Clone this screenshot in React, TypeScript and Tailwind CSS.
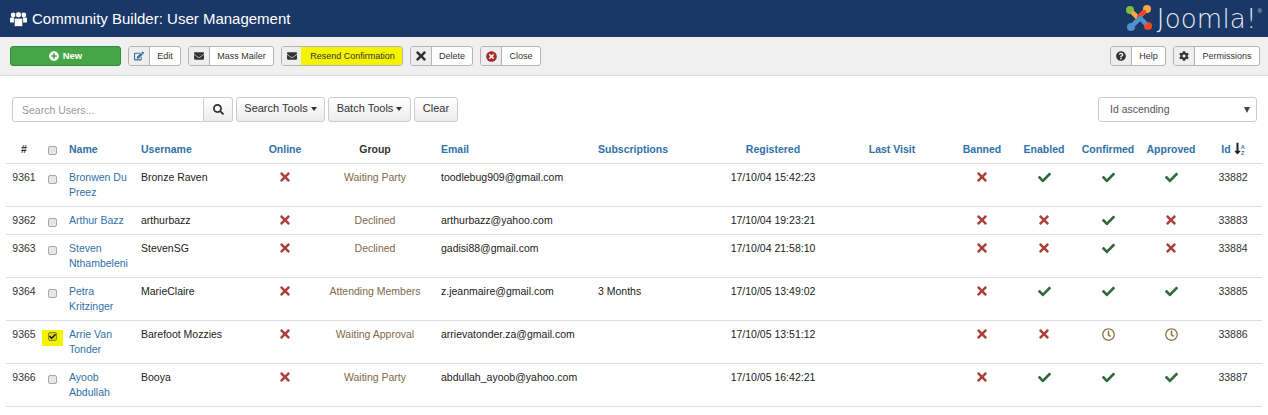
import {
  FaTimes,
  FaCheck,
  FaRegClock,
  FaSearch,
  FaCog,
  FaQuestionCircle,
  FaEnvelope,
  FaEdit,
  FaTimesCircle,
  FaPlusCircle,
  FaLongArrowAltDown,
} from "react-icons/fa";
import type { ReactNode } from "react";

type Status = "yes" | "no" | "wait";

interface Row {
  num: number;
  name: string[];
  username: string;
  group: string;
  email: string;
  subs: string;
  registered: string;
  banned: Status;
  enabled: Status;
  confirmed: Status;
  approved: Status;
  id: number;
  checked?: boolean;
}

const rows: Row[] = [
  { num: 9361, name: ["Bronwen Du", "Preez"], username: "Bronze Raven", group: "Waiting Party", email: "toodlebug909@gmail.com", subs: "", registered: "17/10/04 15:42:23", banned: "no", enabled: "yes", confirmed: "yes", approved: "yes", id: 33882 },
  { num: 9362, name: ["Arthur Bazz"], username: "arthurbazz", group: "Declined", email: "arthurbazz@yahoo.com", subs: "", registered: "17/10/04 19:23:21", banned: "no", enabled: "no", confirmed: "yes", approved: "no", id: 33883 },
  { num: 9363, name: ["Steven", "Nthambeleni"], username: "StevenSG", group: "Declined", email: "gadisi88@gmail.com", subs: "", registered: "17/10/04 21:58:10", banned: "no", enabled: "no", confirmed: "yes", approved: "no", id: 33884 },
  { num: 9364, name: ["Petra", "Kritzinger"], username: "MarieClaire", group: "Attending Members", email: "z.jeanmaire@gmail.com", subs: "3 Months", registered: "17/10/05 13:49:02", banned: "no", enabled: "yes", confirmed: "yes", approved: "yes", id: 33885 },
  { num: 9365, name: ["Arrie Van", "Tonder"], username: "Barefoot Mozzies", group: "Waiting Approval", email: "arrievatonder.za@gmail.com", subs: "", registered: "17/10/05 13:51:12", banned: "no", enabled: "no", confirmed: "wait", approved: "wait", id: 33886, checked: true },
  { num: 9366, name: ["Ayoob", "Abdullah"], username: "Booya", group: "Waiting Party", email: "abdullah_ayoob@yahoo.com", subs: "", registered: "17/10/05 16:42:21", banned: "no", enabled: "yes", confirmed: "yes", approved: "yes", id: 33887 },
];

function StatusIcon({ status }: { status: Status }) {
  if (status === "yes") return <FaCheck className="mx-auto text-[13px] text-[#2f6b3c]" />;
  if (status === "no") return <FaTimes className="mx-auto text-[14px] text-[#a9413c]" />;
  return <FaRegClock className="mx-auto text-[13px] text-[#8a6d3b]" />;
}

function ToolButton({ icon, label, width, highlight }: { icon: ReactNode; label: string; width: string; highlight?: boolean }) {
  return (
    <button className={`flex h-[20px] items-stretch overflow-hidden rounded-[3px] border border-[#b3b3b3] bg-white text-[9px] text-[#333] ${width}`}>
      <span className="flex w-[21px] shrink-0 items-center justify-center border-r border-[#b3b3b3] bg-[#eeeeee] text-[10px] text-[#333]">
        {icon}
      </span>
      {highlight ? (
        <span className="-ml-[2px] flex flex-1 items-center justify-center bg-[#f4f400] pl-[2px] pt-[1px]">{label}</span>
      ) : (
        <span className="flex flex-1 items-center justify-center pt-[1px]">{label}</span>
      )}
    </button>
  );
}

function Caret() {
  return <span className="ml-[3px] inline-block border-x-[3px] border-t-[4px] border-x-transparent border-t-[#333] align-middle" />;
}

function UsersIcon() {
  return (
    <svg width="17" height="16" viewBox="0 0 17 16" fill="#ffffff">
      <circle cx="3.2" cy="4" r="2.4" />
      <circle cx="13.8" cy="4" r="2.4" />
      <path d="M0 7.5 Q0 6.6 1 6.6 H4 V11.5 H0 Z" />
      <path d="M13 6.6 H16 Q17 6.6 17 7.5 V11.5 H13 Z" />
      <circle cx="8.5" cy="3.8" r="3" stroke="#1a3867" strokeWidth="0.7" />
      <path d="M4.3 8.2 Q4.3 7.3 5.3 7.3 H11.7 Q12.7 7.3 12.7 8.2 V14.5 Q12.7 15.5 11.7 15.5 H5.3 Q4.3 15.5 4.3 14.5 Z" stroke="#1a3867" strokeWidth="0.7" />
    </svg>
  );
}

function JoomlaLogo() {
  return (
    <div className="flex items-start gap-[4px]">
      <svg width="28" height="28" viewBox="0 0 28 28" fill="none" strokeWidth="4.4" strokeLinejoin="round" strokeLinecap="round">
        <path d="M5 6 L14 15 L9 20" stroke="#7ac143" />
        <circle cx="5" cy="6" r="4" fill="#7ac143" />
        <path d="M22 5 L13 14 L8 9" stroke="#f9a541" />
        <circle cx="22" cy="5" r="4" fill="#f9a541" />
        <path d="M23 22 L14 13 L19 8" stroke="#f44321" />
        <circle cx="23" cy="22" r="4" fill="#f44321" />
        <path d="M6 23 L15 14 L20 19" stroke="#5091cd" />
        <circle cx="6" cy="23" r="4" fill="#5091cd" />
      </svg>
      <span className="mt-[1px] whitespace-nowrap font-['DejaVu_Sans',sans-serif] text-[26px] font-extralight leading-[28px] tracking-[0.2px] text-[#e8ecf2]">
        Joomla!
      </span>
      <span className="-ml-[3px] mt-[4px] text-[6px] leading-none text-[#cfd6e0]">®</span>
    </div>
  );
}

const thBlue = "px-0 py-0 font-bold text-[#3071a9]";
const box = "block h-[9px] w-[9px] appearance-none rounded-[2px] border border-[#a8a8a8] bg-[#e6e6e6]";

export default function App() {
  return (
    <div className="h-[415px] w-[1268px] overflow-hidden bg-white font-['Liberation_Sans',Arial,sans-serif] text-[10.5px] text-[#333]">
      <header className="flex h-[37px] items-center justify-between bg-[#1a3867] pl-[10px] pr-[6px]">
        <div className="flex items-center gap-[5px] text-white">
          <UsersIcon />
          <h1 className="text-[15px] leading-none">Community Builder: User Management</h1>
        </div>
        <JoomlaLogo />
      </header>

      <div className="flex h-[39px] items-start justify-between border-b border-[#dcdcdc] bg-[#f0f0f0] px-[8px] pt-[9px]">
        <div className="flex gap-[7px] pl-[2px]">
          <button className="flex h-[20px] w-[111px] items-center justify-center gap-[4px] rounded-[3px] border border-[#2e8b3a] bg-[#46a546] text-[9.5px] font-bold text-white">
            <FaPlusCircle className="text-[10px]" />
            New
          </button>
          <ToolButton width="w-[53px]" icon={<FaEdit className="text-[#3b6f9a]" />} label="Edit" />
          <ToolButton width="w-[86px]" icon={<FaEnvelope />} label="Mass Mailer" />
          <ToolButton width="w-[122px]" icon={<FaEnvelope />} label="Resend Confirmation" highlight />
          <ToolButton width="w-[63px]" icon={<FaTimes className="text-[14px]" />} label="Delete" />
          <ToolButton width="w-[61px]" icon={<FaTimesCircle className="text-[11px] text-[#a82a2a]" />} label="Close" />
        </div>
        <div className="flex gap-[7px]">
          <ToolButton width="w-[56px]" icon={<FaQuestionCircle />} label="Help" />
          <ToolButton width="w-[87px]" icon={<FaCog />} label="Permissions" />
        </div>
      </div>

      <div className="flex items-start justify-between pl-[12px] pr-[11px] pt-[21px]">
        <div className="flex gap-[3px]">
          <div className="flex">
            <input
              className="h-[25px] w-[192px] rounded-l-[3px] border border-[#cccccc] px-[9px] text-[10.5px] outline-none placeholder:text-[#999]"
              placeholder="Search Users..."
            />
            <button className="flex h-[25px] w-[29px] items-center justify-center rounded-r-[3px] border border-l-0 border-[#cccccc] bg-linear-to-b from-white to-[#ececec] text-[11px]">
              <FaSearch />
            </button>
          </div>
          <button className="h-[25px] w-[89px] rounded-[3px] border border-[#cccccc] bg-linear-to-b from-white to-[#ececec] pb-[2px] text-[11px]">
            Search Tools
            <Caret />
          </button>
          <button className="h-[25px] w-[83px] rounded-[3px] border border-[#cccccc] bg-linear-to-b from-white to-[#ececec] pb-[2px] text-[11px]">
            Batch Tools
            <Caret />
          </button>
          <button className="h-[25px] w-[44px] rounded-[3px] border border-[#cccccc] bg-linear-to-b from-white to-[#ececec] pb-[2px] text-[11px]">
            Clear
          </button>
        </div>
        <div className="flex h-[25px] w-[159px] items-center justify-between rounded-[3px] border border-[#cccccc] pl-[11px] pr-[6px] text-[10.5px] text-[#555]">
          Id ascending
          <span className="inline-block border-x-[3px] border-t-[6px] border-x-transparent border-t-[#444]" />
        </div>
      </div>

      <div className="pl-[6px] pt-[15px]">
        <table className="w-[1256px] table-fixed border-collapse">
          <colgroup>
            <col className="w-[36px]" />
            <col className="w-[21px]" />
            <col className="w-[72px]" />
            <col className="w-[120px]" />
            <col className="w-[60px]" />
            <col className="w-[120px]" />
            <col className="w-[157px]" />
            <col className="w-[124px]" />
            <col className="w-[114px]" />
            <col className="w-[124px]" />
            <col className="w-[56px]" />
            <col className="w-[68px]" />
            <col className="w-[60px]" />
            <col className="w-[66px]" />
            <col className="w-[58px]" />
          </colgroup>
          <thead>
            <tr className="h-[26px] border-b border-[#dddddd]">
              <th className="font-bold text-[#333]">#</th>
              <th className="pt-[2px]">
                <input type="checkbox" className={`${box} mx-auto`} readOnly />
              </th>
              <th className={`${thBlue} pl-[6px] text-left`}>Name</th>
              <th className={`${thBlue} pl-[6px] text-left`}>Username</th>
              <th className={`${thBlue} text-center`}>Online</th>
              <th className="font-bold text-[#333]">Group</th>
              <th className={`${thBlue} pl-[6px] text-left`}>Email</th>
              <th className={`${thBlue} pl-[6px] text-left`}>Subscriptions</th>
              <th className={`${thBlue} text-center`}>Registered</th>
              <th className={`${thBlue} text-center`}>Last Visit</th>
              <th className={`${thBlue} text-center`}>Banned</th>
              <th className={`${thBlue} text-center`}>Enabled</th>
              <th className={`${thBlue} text-center`}>Confirmed</th>
              <th className={`${thBlue} text-center`}>Approved</th>
              <th className={`${thBlue} text-center`}>
                Id
                <FaLongArrowAltDown className="-mr-[3px] ml-0 inline align-[-2px] text-[13px] text-[#222]" />
                <span className="inline-flex flex-col align-middle text-[5.5px] font-bold leading-[6px] text-[#3071a9]">
                  <span>A</span>
                  <span>Z</span>
                </span>
              </th>
            </tr>
          </thead>
          <tbody>
            {rows.map((row) => (
              <tr key={row.num} className="border-b border-[#dddddd] align-top">
                <td className="py-[6px] text-center leading-[15px] text-[#333]">{row.num}</td>
                <td className="py-[6px]">
                  {row.checked ? (
                    <div className="mt-[3px] flex h-[16px] justify-center bg-[#f4f400] pt-[2px]">
                      <span className="flex h-[9px] w-[9px] items-center justify-center rounded-[2px] border border-[#8a8a20] bg-[#d8d810]">
                        <FaCheck className="text-[7px] text-[#111]" />
                      </span>
                    </div>
                  ) : (
                    <div className="mt-[5px] flex justify-center">
                      <input type="checkbox" readOnly className={box} />
                    </div>
                  )}
                </td>
                <td className="whitespace-nowrap px-[6px] py-[6px] leading-[15px] text-[#3071a9]">
                  {row.name.map((part) => (
                    <div key={part}>{part}</div>
                  ))}
                </td>
                <td className="px-[6px] py-[6px] leading-[15px] text-[#222]">{row.username}</td>
                <td className="py-[6px]">
                  <div className="flex h-[15px] items-center">
                    <StatusIcon status="no" />
                  </div>
                </td>
                <td className="py-[6px] text-center leading-[15px] text-[#80694a]">{row.group}</td>
                <td className="px-[6px] py-[6px] leading-[15px] text-[#222]">{row.email}</td>
                <td className="px-[6px] py-[6px] leading-[15px] text-[#222]">{row.subs}</td>
                <td className="py-[6px] text-center leading-[15px] text-[#222]">{row.registered}</td>
                <td className="py-[6px]" />
                {[row.banned, row.enabled, row.confirmed, row.approved].map((status, i) => (
                  <td key={i} className="py-[6px]">
                    <div className="flex h-[15px] items-center">
                      <StatusIcon status={status} />
                    </div>
                  </td>
                ))}
                <td className="py-[6px] text-center leading-[15px] text-[#333]">{row.id}</td>
              </tr>
            ))}
          </tbody>
        </table>
      </div>
    </div>
  );
}
